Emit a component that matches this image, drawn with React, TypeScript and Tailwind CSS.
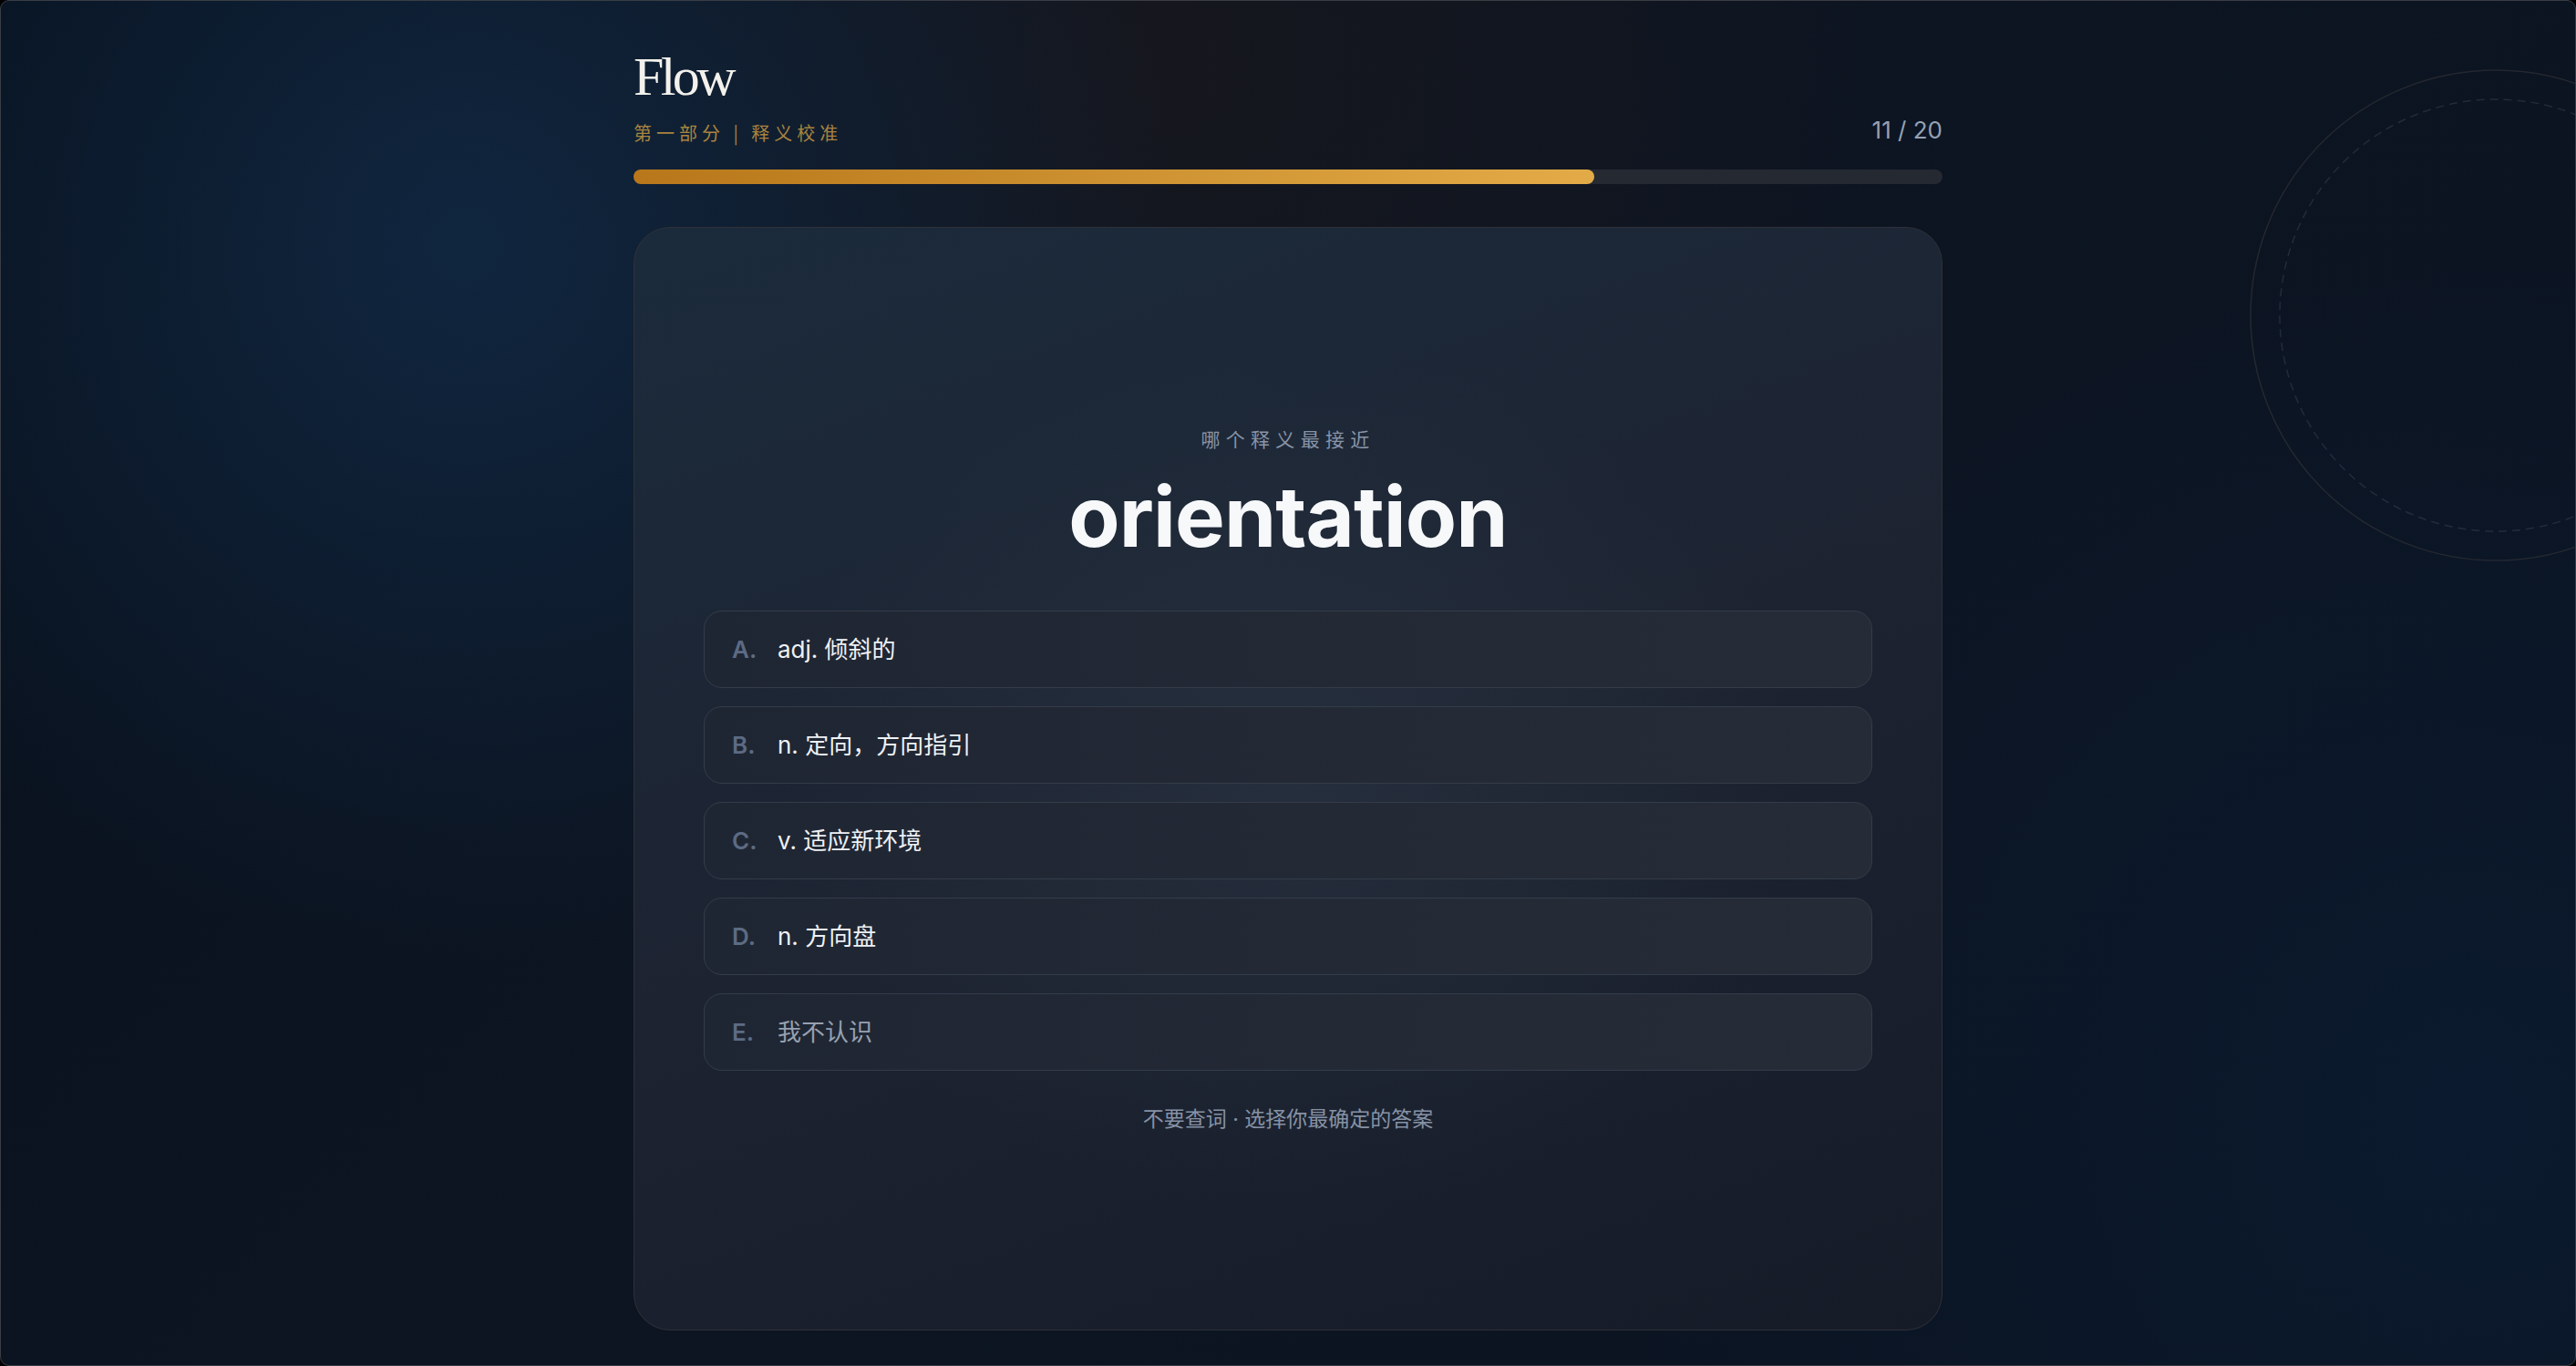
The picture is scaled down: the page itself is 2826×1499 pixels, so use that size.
const OPTIONS = [
  { key: 'A', text: 'adj. 倾斜的' },
  { key: 'B', text: 'n. 定向，方向指引' },
  { key: 'C', text: 'v. 适应新环境' },
  { key: 'D', text: 'n. 方向盘' },
  { key: 'E', text: '我不认识', muted: true },
];

export default function App() {
  const current = 11;
  const total = 20;
  const progress = 73.4;

  return (
    <div className="h-screen w-full bg-black font-['Inter','Noto_Sans_CJK_SC',sans-serif]">
      <div className="relative h-full overflow-hidden rounded-[10px] border border-[#3a3d44] bg-[radial-gradient(circle_at_18%_18%,#10263f_0%,rgba(16,38,63,0)_30%),radial-gradient(circle_at_96%_82%,#0b1a2e_0%,rgba(11,26,46,0)_32%),radial-gradient(circle_at_45%_5%,#16171e_0%,rgba(22,23,30,0)_40%),linear-gradient(135deg,#07101c_0%,#0d1522_45%,#0a1321_100%)]">
        <Rings />

        <main className="relative mx-auto flex h-full w-[1436px] flex-col pt-[52px] pb-[38px]">
          <header className="flex items-end justify-between">
            <div className="flex flex-col">
              <h1 className="font-['Liberation_Serif',serif] text-[60px] leading-[62px] font-normal tracking-[-0.06em] text-[#f3f1ec]">
                Flow
              </h1>
              <div className="mt-[17px] font-['Noto_Sans_CJK_SC',sans-serif] text-[20px] leading-[28px] tracking-[0.25em] text-[#a9843f]">
                第一部分 | 释义校准
              </div>
            </div>
            <div className="mb-[3px] text-[26px] leading-[28px] text-[#94a1b5]">
              {current} / {total}
            </div>
          </header>

          <div className="mt-[26px] h-4 w-full rounded-full bg-[#252932]">
            <div
              className="h-full rounded-full bg-[linear-gradient(90deg,#b7771a,#e3ab47)]"
              style={{ width: `${progress}%` }}
            />
          </div>

          <section className="mt-[47px] flex flex-1 flex-col items-center justify-center rounded-[40px] border border-[#2f3138] bg-[radial-gradient(ellipse_at_50%_50%,rgba(44,56,70,0.55)_0%,rgba(44,56,70,0)_55%),linear-gradient(160deg,#1b2b3c_0%,#1d2331_50%,#151b27_100%)]">
            <div className="font-['Noto_Sans_CJK_SC',sans-serif] text-[21px] leading-[28px] tracking-[0.3em] text-[#8894a7]">
              哪个释义最接近
            </div>
            <div className="mt-[26px] text-[92px] leading-none font-bold tracking-[-0.01em] text-[#f7f8fa]">
              orientation
            </div>

            <div className="mt-[57px] flex w-[1282px] flex-col gap-5">
              {OPTIONS.map(o => (
                <button
                  key={o.key}
                  className="flex h-[85px] items-center rounded-[20px] border border-[#343c49] bg-[linear-gradient(90deg,#1f2633,#262c37)] px-[30px] text-left text-[26px]"
                >
                  <span className="w-[50px] font-semibold text-[#5c6b84]">{o.key}.</span>
                  <span className={o.muted ? 'text-[#97a1b1]' : 'text-[#eef1f5]'}>{o.text}</span>
                </button>
              ))}
            </div>

            <div className="mt-[38px] text-[23px] leading-[30px] text-[#8692a5]">
              不要查词 · 选择你最确定的答案
            </div>
          </section>
        </main>
      </div>
    </div>
  );
}

function Rings() {
  return (
    <svg
      className="pointer-events-none absolute top-[74px] left-[2466px] h-[542px] w-[542px]"
      viewBox="0 0 542 542"
      fill="none"
    >
      <circle cx="271" cy="271" r="269" stroke="rgba(150,130,105,0.18)" strokeWidth="1.5" />
      <circle cx="271" cy="271" r="237" stroke="rgba(120,135,155,0.2)" strokeWidth="1.5" strokeDasharray="9 6" />
    </svg>
  );
}
